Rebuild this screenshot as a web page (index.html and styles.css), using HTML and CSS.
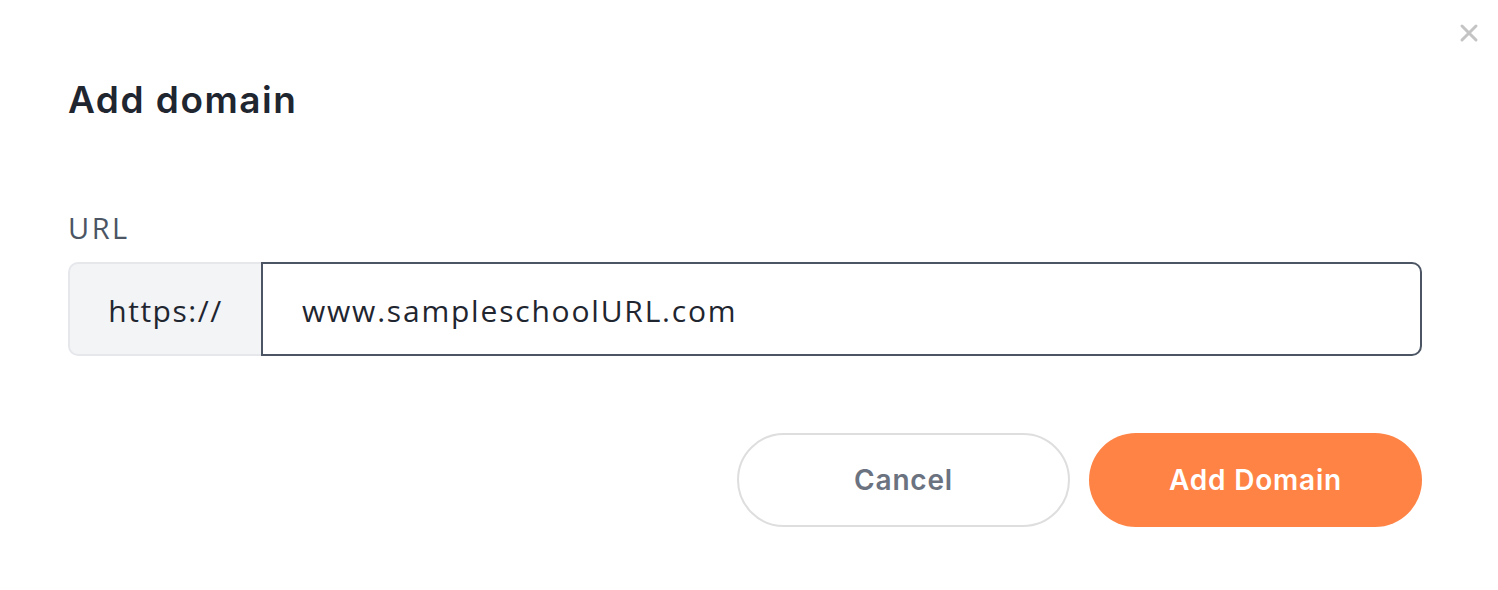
FILE: index.html
```html
<!DOCTYPE html>
<html lang="en">
<head>
<meta charset="utf-8">
<title>Add domain</title>
<link rel="stylesheet" href="styles.css">
</head>
<body>
<div class="modal">
  <button class="close" aria-label="Close">
    <svg width="20" height="20" viewBox="0 0 20 20"><path d="M3 3L17 17M17 3L3 17" stroke="#c4c4c4" stroke-width="3" stroke-linecap="round"/></svg>
  </button>
  <h1 class="title">Add domain</h1>
  <label class="label" for="url">URL</label>
  <div class="input-group">
    <span class="prefix">https://</span>
    <input id="url" class="input" type="text" value="www.sampleschoolURL.com">
  </div>
  <div class="actions">
    <button class="btn btn-cancel">Cancel</button>
    <button class="btn btn-primary">Add Domain</button>
  </div>
</div>
</body>
</html>
```
FILE: styles.css
```css
html, body {
  margin: 0;
  padding: 0;
  background: #ffffff;
}
.modal {
  position: relative;
  box-sizing: border-box;
  width: 1498px;
  height: 590px;
  padding: 72px 76px 0 68px;
  font-family: "Open Sans", "Liberation Sans", sans-serif;
}
.close {
  position: absolute;
  top: 23px;
  right: 19px;
  border: 0;
  background: none;
  padding: 0;
  width: 20px;
  height: 20px;
  cursor: pointer;
}
.title {
  margin: 0;
  font-family: "Inter", "Liberation Sans", sans-serif;
  font-size: 37px;
  font-weight: 600;
  line-height: 56px;
  color: #1f2630;
  letter-spacing: 1.5px;
}
.label {
  display: block;
  margin-top: 83px;
  font-size: 29px;
  line-height: 34px;
  color: #4b5563;
  font-family: "Open Sans", "Liberation Sans", sans-serif;
  letter-spacing: 2.5px;
}
.input-group {
  display: flex;
  margin-top: 17px;
  height: 94px;
}
.prefix {
  box-sizing: border-box;
  width: 193px;
  display: flex;
  align-items: center;
  justify-content: center;
  background: #f3f4f6;
  border: 2px solid #e5e7eb;
  border-right: 0;
  border-radius: 10px 0 0 10px;
  font-size: 30px;
  color: #1f2630;
  letter-spacing: 1.5px;
  padding-top: 2px;
}
.input {
  flex: 1;
  box-sizing: border-box;
  height: 94px;
  border: 2px solid #4b5563;
  border-radius: 0 10px 10px 0;
  padding: 2px 0 0 39px;
  font-family: "Open Sans", "Liberation Sans", sans-serif;
  font-size: 30px;
  color: #1f2630;
  letter-spacing: 1.8px;
  outline: none;
}
.actions {
  display: flex;
  justify-content: flex-end;
  gap: 19px;
  margin-top: 77px;
}
.btn {
  box-sizing: border-box;
  width: 333px;
  height: 94px;
  border-radius: 47px;
  font-family: "Inter", "Liberation Sans", sans-serif;
  font-size: 28px;
  font-weight: 600;
  letter-spacing: 0.8px;
  cursor: pointer;
}
.btn-cancel {
  background: #ffffff;
  border: 2px solid #dedede;
  color: #6b7280;
}
.btn-primary {
  background: #ff8345;
  border: 0;
  color: #ffffff;
}
```
